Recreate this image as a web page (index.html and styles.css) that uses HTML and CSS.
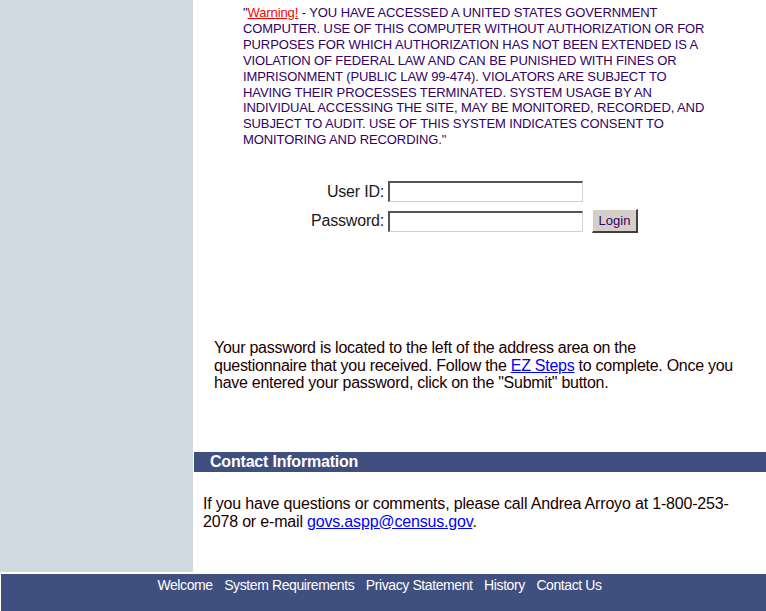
FILE: index.html
```html
<!DOCTYPE html>
<html lang="en">
<head>
    <meta charset="UTF-8">
    <title>Government Units Survey - Login</title>
    <link rel="stylesheet" href="styles.css">
</head>
<body>
    <div class="page">
        <div class="sidebar"></div>
        <div class="main">
            <p class="warning">"<a href="#" class="warn-link">Warning!</a> - YOU HAVE ACCESSED A UNITED STATES GOVERNMENT COMPUTER. USE OF THIS COMPUTER WITHOUT AUTHORIZATION OR FOR PURPOSES FOR WHICH AUTHORIZATION HAS NOT BEEN EXTENDED IS A VIOLATION OF FEDERAL LAW AND CAN BE PUNISHED WITH FINES OR IMPRISONMENT (PUBLIC LAW 99-474). VIOLATORS ARE SUBJECT TO HAVING THEIR PROCESSES TERMINATED. SYSTEM USAGE BY AN INDIVIDUAL ACCESSING THE SITE, MAY BE MONITORED, RECORDED, AND SUBJECT TO AUDIT. USE OF THIS SYSTEM INDICATES CONSENT TO MONITORING AND RECORDING."</p>

            <form class="login-form" onsubmit="return false;">
                <label for="userid" class="login-label">User ID:</label>
                <input type="text" id="userid" class="login-input">
                <span></span>
                <label for="password" class="login-label">Password:</label>
                <input type="password" id="password" class="login-input">
                <button type="submit" class="login-button">Login</button>
            </form>

            <p class="help-text">Your password is located to the left of the address area on the<br>
            questionnaire that you received. Follow the <a href="#">EZ Steps</a> to complete. Once you have entered your password, click on the "Submit" button.</p>

            <div class="section-title">Contact Information</div>
            <p class="contact-text">If you have questions or comments, please call Andrea Arroyo at 1-800-253-2078 or e-mail <a href="#">govs.aspp@census.gov</a>.</p>
        </div>
    </div>
    <div class="footer">
        <a href="#">Welcome</a>
        <a href="#">System Requirements</a>
        <a href="#">Privacy Statement</a>
        <a href="#">History</a>
        <a href="#">Contact Us</a>
    </div>
</body>
</html>
```

FILE: styles.css
```css
body {
    margin: 0;
    background-color: white;
    font-family: "Liberation Sans", Arial, sans-serif;
    color: #1a0000;
}
.page {
    display: flex;
    height: 572px;
}
.sidebar {
    width: 193px;
    flex-shrink: 0;
    background-color: #d1d9e0;
}
.main {
    flex: 1;
    margin-left: 1px;
}
.warning {
    margin: 5px 0 0 49px;
    width: 475px;
    font-size: 13px;
    line-height: 15.9px;
    letter-spacing: -0.1px;
    color: #330066;
}
.warn-link {
    color: #ff0000;
}
.login-form {
    display: grid;
    grid-template-columns: 190px 195px auto;
    column-gap: 4px;
    row-gap: 7px;
    align-items: center;
    margin-top: 33px;
}
.login-label {
    text-align: right;
    font-size: 16px;
    letter-spacing: -0.2px;
    color: #1a1a1a;
}
.login-input {
    box-sizing: border-box;
    height: 21px;
    width: 195px;
    margin: 0;
    border-style: solid;
    border-width: 2px 1px 1px 2px;
    border-color: #555555 #d4d0c8 #d4d0c8 #555555;
}
.login-button {
    margin-left: 5px;
    width: 46px;
    height: 24px;
    background-color: #d4d0c8;
    border-style: solid;
    border-width: 1px 2px 2px 1px;
    border-color: #ffffff #404040 #404040 #ffffff;
    font-family: "Liberation Sans", Arial, sans-serif;
    font-size: 13px;
    color: #330066;
    padding: 0;
}
.help-text {
    margin: 106px 0 0 20px;
    width: 530px;
    font-size: 16px;
    line-height: 17.5px;
    letter-spacing: -0.27px;
}
.help-text a, .contact-text a {
    color: #0000ff;
}
.section-title {
    margin-top: 60px;
    height: 20px;
    line-height: 19px;
    background-color: #3f4f80;
    color: white;
    font-weight: bold;
    font-size: 16px;
    letter-spacing: -0.2px;
    padding-left: 16px;
}
.contact-text {
    margin: 23px 0 0 9px;
    width: 540px;
    font-size: 16px;
    line-height: 18px;
    letter-spacing: -0.18px;
}
.footer {
    margin: 2px 0 0 1px;
    height: 37px;
    background-color: #3f4f80;
    text-align: center;
    padding: 3px 8px 0 0;
    box-sizing: border-box;
    font-size: 14px;
    letter-spacing: -0.4px;
}
.footer a {
    color: white;
    text-decoration: none;
    margin: 0 4px;
}
```
